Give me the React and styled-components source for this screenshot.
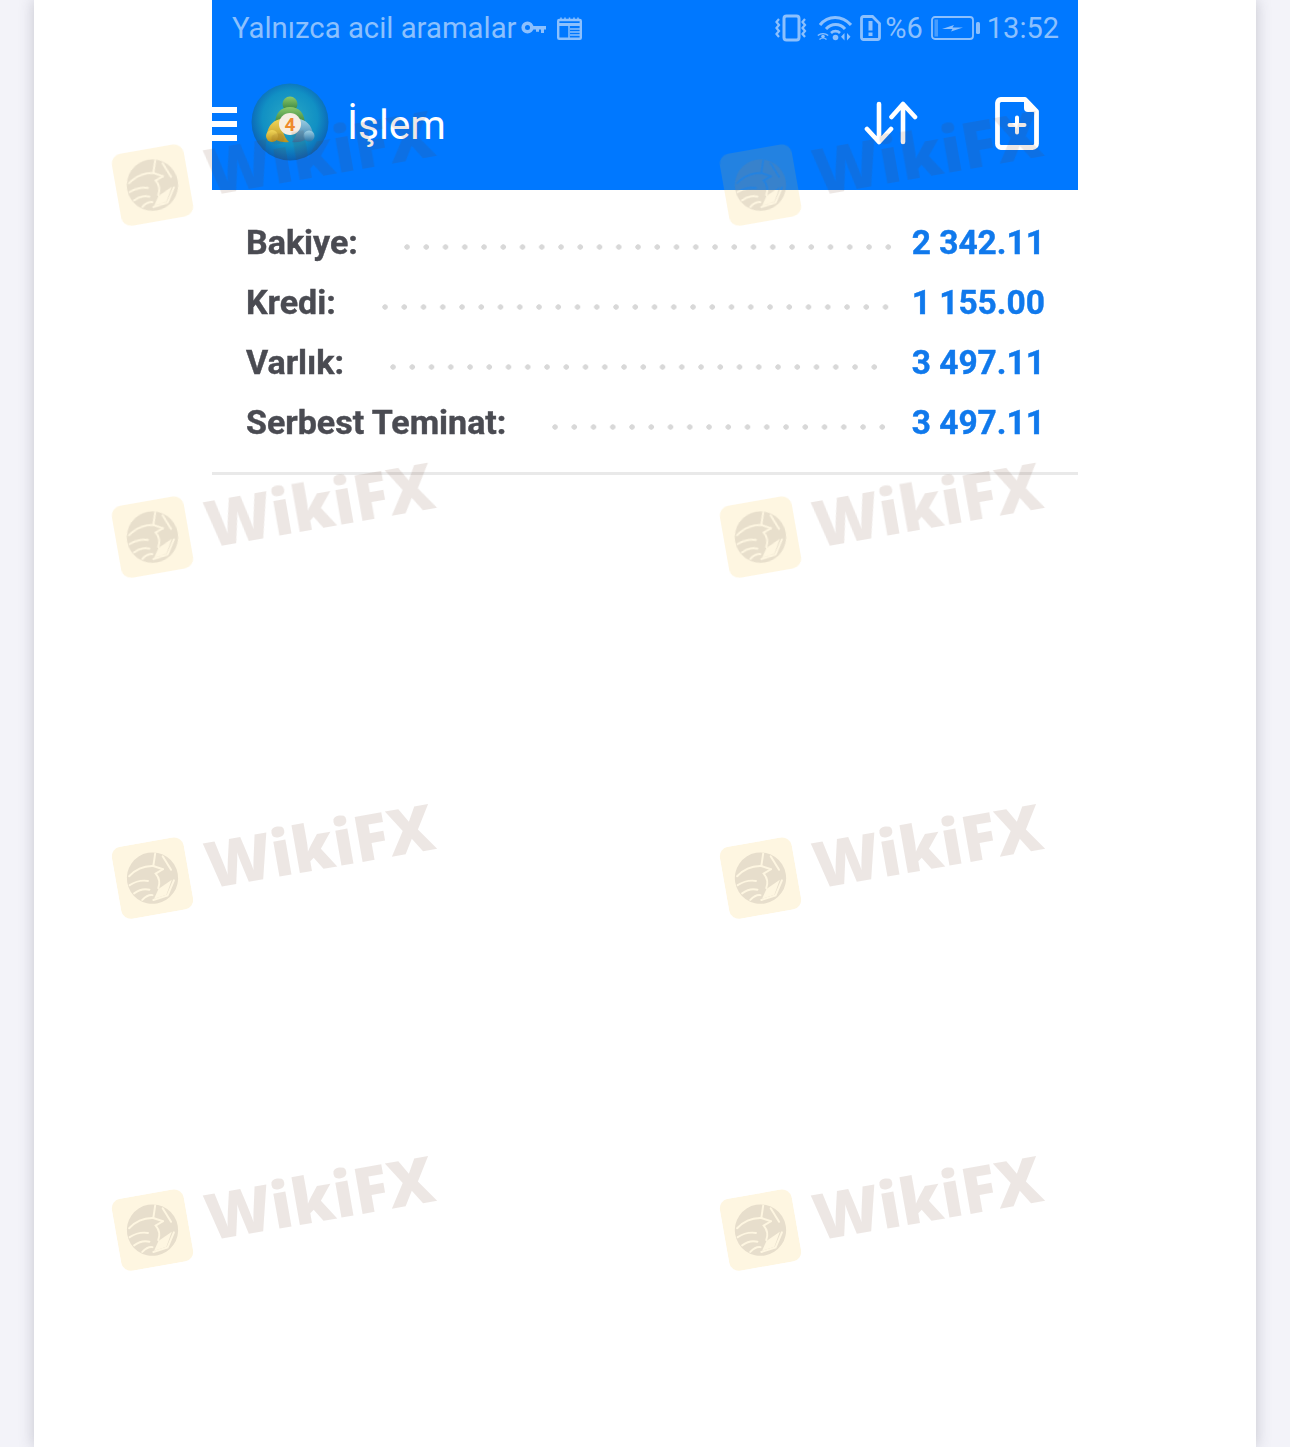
import React from 'react';
import styled, { createGlobalStyle } from 'styled-components';

const accounts = [
  { label: 'Bakiye:', value: '2 342.11', to: 17 },
  { label: 'Kredi:', value: '1 155.00', to: 19 },
  { label: 'Varlık:', value: '3 497.11', to: 29 },
  { label: 'Serbest Teminat:', value: '3 497.11', to: 21 },
];

const watermarks = [
  { left: 114, top: 126 }, { left: 722, top: 126 },
  { left: 114, top: 478 }, { left: 722, top: 478 },
  { left: 114, top: 819 }, { left: 722, top: 819 },
  { left: 114, top: 1171 }, { left: 722, top: 1171 },
];

const Eagle = () => (
  <svg width="73" height="73" viewBox="0 0 74 74">
    <defs>
      <mask id="eagleCut">
        <rect width="74" height="74" fill="#fff" />
        <g fill="none" stroke="#000" strokeWidth="2" strokeLinecap="round">
          <path d="M14 31c8-6 17-8 26-6l9 5" />
          <path d="M40 25l4-12" />
          <path d="M49 30l-8 3c3 5 3 10 0 15" />
          <path d="M13 40c7-3 13-3 19-1" />
          <path d="M16 49c6-3 11-3 16-1" />
          <path d="M23 57c4-3 8-4 11-3" />
          <path d="M34 59l15-2 9-14" />
          <path d="M51 17l6 15" />
        </g>
        <path d="M41 49l15-7-8 14-13 2z" fill="#000" />
      </mask>
    </defs>
    <rect width="74" height="74" rx="10" fill="#f9bd2c" fillOpacity="0.14" />
    <circle cx="37" cy="37" r="26" fill="#8a8078" fillOpacity="0.2" mask="url(#eagleCut)" />
  </svg>
);

const VibrateIcon = () => (
  <svg width="34" height="28" viewBox="0 0 34 28" fill="none" stroke="currentColor" strokeWidth="2.2">
    <rect x="9" y="2" width="15" height="24" rx="2.5" strokeWidth="3" />
    <path d="M4 5 1.500 8 4 11 1.500 14 4 17 1.500 20 4 23" />
    <path d="M30 5l-2.500 3L30 11l-2.500 3L30 17l-2.500 3L30 23" />
  </svg>
);

const WifiIcon = () => (
  <svg width="35" height="26" viewBox="0 0 35 26" fill="none" stroke="currentColor">
    <path d="M3 10C11 0 25 0 34 10" strokeWidth="3" />
    <path d="M9 14c5.500-6 14-6 19 0" strokeWidth="3" />
    <path d="M14 18c2.500-2.500 6.500-2.500 9 0" strokeWidth="2.600" />
    <circle cx="18.500" cy="22.500" r="2.800" fill="currentColor" stroke="none" />
    <circle cx="6" cy="21.500" r="1.800" fill="currentColor" stroke="none" />
    <path d="M2.500 24.500a5 5 0 0 1 7 0M0.800 20.500a8 8 0 0 1 10.400 0" strokeWidth="1.300" />
    <path d="M27.500 18v7.500l-3.500-3.700zM30 18v7.500l3.500-3.700z" fill="currentColor" stroke="none" />
  </svg>
);

const SimAlertIcon = () => (
  <svg width="21" height="26" viewBox="0 0 21 26" fill="none">
    <path d="M3.500 1.500h9l7 7v14a2 2 0 0 1-2 2h-14a2 2 0 0 1-2-2v-19a2 2 0 0 1 2-2z" stroke="currentColor" strokeWidth="2.800" />
    <path d="M8.500 6h4v9.500h-4zM8.500 17.500h4V21h-4z" fill="currentColor" />
  </svg>
);

const BatteryIcon = () => (
  <svg width="49" height="24" viewBox="0 0 49 24" fill="none">
    <rect x="1" y="1" width="41" height="22" rx="3" stroke="currentColor" strokeWidth="1.800" />
    <rect x="3.500" y="3.500" width="3.500" height="17" fill="currentColor" fillOpacity="0.5" />
    <path d="M11 13l12-4-1.500 2.500H32l-12 4 1.500-2.500z" fill="currentColor" />
    <rect x="45" y="6" width="4" height="12" rx="1.500" fill="currentColor" />
  </svg>
);

const KeyIcon = () => (
  <svg width="25" height="14" viewBox="0 0 25 14" fill="none">
    <circle cx="6.500" cy="6.500" r="4.300" stroke="currentColor" strokeWidth="3.600" />
    <path d="M11 5h14v3.400h-2v3.500h-3V8.400h-2v2.300h-3V8.400h-4z" fill="currentColor" />
  </svg>
);

const CalendarIcon = () => (
  <svg width="25" height="23" viewBox="0 0 25 23" fill="none" stroke="currentColor">
    <rect x="1.200" y="3" width="22.600" height="18.800" rx="1" strokeWidth="2.400" />
    <path d="M1 7.500h23" strokeWidth="3" />
    <path d="M4 0.500v3M8 0.500v3M12.500 0.500v3M17 0.500v3M21 0.500v3" strokeWidth="1.500" />
    <path d="M12 9v12M13 12h10M13 15h10M13 18h10" strokeWidth="1.500" />
  </svg>
);

const SortIcon = () => (
  <svg width="55" height="44" viewBox="0 0 55 44" fill="none" stroke="#fff" strokeWidth="4.600" strokeLinecap="round" strokeLinejoin="round">
    <path d="M15 3v38M3 28l12 13 12-13" />
    <path d="M39 3v38M27.500 16 39 3l12 13" />
  </svg>
);

const NewFileIcon = () => (
  <svg width="44" height="53" viewBox="0 0 44 53" fill="none">
    <path d="M6 2.500h24l11.500 12V46a4 4 0 0 1-4 4.500H6A4 4 0 0 1 2.500 46V6A4 4 0 0 1 6 2.500z" stroke="#fff" strokeWidth="4.800" strokeLinejoin="round" />
    <path d="M29 1l14 14H33a4 4 0 0 1-4-4z" fill="#fff" />
    <path d="M22 20.500v15M14.500 28h15" stroke="#fff" strokeWidth="4" strokeLinecap="round" />
  </svg>
);

const TerminalLogo = () => (
  <svg width="78" height="78" viewBox="0 0 78 78">
    <defs>
      <radialGradient id="mtDisc" cx="50%" cy="45%" r="55%">
        <stop offset="0%" stopColor="#2aa9c4" />
        <stop offset="65%" stopColor="#1190c4" />
        <stop offset="100%" stopColor="#0a5fb4" />
      </radialGradient>
      <linearGradient id="mtGreen" x1="0" y1="0" x2="0" y2="1">
        <stop offset="0%" stopColor="#8cc96a" />
        <stop offset="100%" stopColor="#2f7d3c" />
      </linearGradient>
      <linearGradient id="mtGold" x1="0" y1="0" x2="0" y2="1">
        <stop offset="0%" stopColor="#f1d65a" />
        <stop offset="100%" stopColor="#b9921f" />
      </linearGradient>
      <linearGradient id="mtBlue" x1="0" y1="0" x2="0" y2="1">
        <stop offset="0%" stopColor="#9fd0e4" />
        <stop offset="100%" stopColor="#2c76a8" />
      </linearGradient>
    </defs>
    <circle cx="39" cy="39" r="38.500" fill="url(#mtDisc)" />
    <circle cx="39" cy="21" r="7.500" fill="url(#mtGreen)" />
    <path d="M24 42c0-12 6-18 15-18s15 6 15 18c-6-6-10-8-15-8s-9 2-15 8z" fill="url(#mtGreen)" />
    <path d="M33 36c-9-1-16 6-17 15 7 6 14 9 22 8-6-6-8-14-5-23z" fill="url(#mtGold)" />
    <circle cx="21" cy="53" r="6" fill="url(#mtGold)" />
    <path d="M45 36c9-1 16 6 17 15-6 6-12 9-21 8 5-6 7-14 4-23z" fill="url(#mtBlue)" />
    <circle cx="58" cy="53" r="5.500" fill="url(#mtBlue)" />
    <circle cx="39" cy="41" r="11" fill="#f7ede2" />
    <FourDigit x="39" y="48" textAnchor="middle">4</FourDigit>
  </svg>
);

export default function App() {
  return (
    <Page>
      <GlobalStyle />
      <Sheet>
        <Phone>
          <StatusBar>
            <StatusGroup>
              <CarrierText>Yalnızca acil aramalar</CarrierText>
              <KeyIcon />
              <CalendarGap><CalendarIcon /></CalendarGap>
            </StatusGroup>
            <StatusGroup>
              <VibrateIcon />
              <WifiSlot><WifiIcon /></WifiSlot>
              <SimAlertIcon />
              <BatteryText>%6</BatteryText>
              <BatterySlot><BatteryIcon /></BatterySlot>
              <ClockText>13:52</ClockText>
            </StatusGroup>
          </StatusBar>
          <AppBar>
            <MenuButton><span /><span /><span /></MenuButton>
            <LogoSlot><TerminalLogo /></LogoSlot>
            <Title>İşlem</Title>
            <Actions>
              <SortIcon />
              <NewFileIcon />
            </Actions>
          </AppBar>
          <AccountList>
            {accounts.map((row) => (
              <AccountRow key={row.label}>
                <AccountLabel>{row.label}</AccountLabel>
                <Leader $to={row.to} />
                <AccountValue>{row.value}</AccountValue>
              </AccountRow>
            ))}
          </AccountList>
        </Phone>
      </Sheet>
      {watermarks.map((mark) => (
        <Watermark key={`${mark.left}-${mark.top}`} style={{ left: mark.left, top: mark.top }}>
          <Eagle />
          <WatermarkText>WikiFX</WatermarkText>
        </Watermark>
      ))}
    </Page>
  );
}

const GlobalStyle = createGlobalStyle`
  html, body {
    margin: 0;
    padding: 0;
    background: #f3f3f9;
  }
  * {
    box-sizing: border-box;
  }
`;

const Page = styled.div`
  position: relative;
  width: 1290px;
  height: 1447px;
  overflow: hidden;
  padding: 0 34px;
  background: #f3f3f9;
  font-family: Roboto, "Liberation Sans", sans-serif;
`;

const Sheet = styled.div`
  height: 100%;
  padding-left: 178px;
  background: #fff;
  box-shadow: 0 0 14px rgba(60, 60, 80, 0.25);
`;

const Phone = styled.div`
  width: 866px;
  filter: blur(0.4px);
`;

const StatusBar = styled.div`
  display: flex;
  align-items: center;
  justify-content: space-between;
  height: 56px;
  padding: 0 19px 0 20px;
  background: #0078ff;
  color: #8cc0fd;
`;

const StatusGroup = styled.div`
  display: flex;
  align-items: center;
`;

const CarrierText = styled.span`
  margin-right: 4px;
  font-size: 29.3px;
  font-weight: 400;
`;

const CalendarGap = styled.span`
  display: flex;
  margin-left: 11px;
`;

const WifiSlot = styled.span`
  display: flex;
  margin: 0 8px;
`;

const BatteryText = styled.span`
  margin-left: 4px;
  font-size: 29px;
`;

const BatterySlot = styled.span`
  display: flex;
  margin: 0 7px 0 8px;
`;

const ClockText = styled.span`
  font-size: 29px;
`;

const AppBar = styled.div`
  display: flex;
  align-items: center;
  height: 134px;
  background: #0078ff;
`;

const MenuButton = styled.div`
  display: flex;
  flex-direction: column;
  gap: 8px;
  width: 25px;
  margin-top: 2px;
  span {
    display: block;
    height: 6px;
    background: #fff;
  }
`;

const LogoSlot = styled.div`
  display: flex;
  margin: -2px 0 0 14px;
`;

const Title = styled.h1`
  margin: 4px 0 0 18px;
  color: #fff;
  font-size: 40.5px;
  font-weight: 400;
`;

const Actions = styled.div`
  display: flex;
  align-items: center;
  gap: 76px;
  margin: 0 39px 0 auto;
`;

const FourDigit = styled.text`
  fill: #ef8a2c;
  font-family: Roboto, sans-serif;
  font-size: 19px;
  font-weight: 700;
`;

const AccountList = styled.div`
  padding: 22px 33px 20px 34px;
  border-bottom: 3px solid #e9e9e9;
`;

const AccountRow = styled.div`
  display: flex;
  align-items: center;
  height: 60px;
`;

const AccountLabel = styled.span`
  color: #4a4b52;
  font-size: 34px;
  font-weight: 700;
  white-space: nowrap;
  -webkit-text-stroke: 0.4px #4a4b52;
`;

const Leader = styled.span`
  flex: 1;
  height: 6px;
  margin: 10px ${(p) => p.$to}px 0 46px;
  background-image: radial-gradient(circle at 3px 3px, #d8d8d8 2.4px, transparent 3px);
  background-size: 19.25px 6px;
  background-repeat: repeat-x;
`;

const AccountValue = styled.span`
  color: #1079ec;
  font-size: 33.5px;
  font-weight: 700;
  white-space: nowrap;
  -webkit-text-stroke: 0.4px #1079ec;
`;

const Watermark = styled.div`
  position: absolute;
  display: flex;
  align-items: center;
  gap: 18px;
  height: 74px;
  transform: rotate(-10deg);
  pointer-events: none;
`;

const WatermarkText = styled.span`
  margin-top: -6px;
  color: rgba(110, 60, 30, 0.12);
  font-family: "Open Sans", sans-serif;
  font-size: 64px;
  font-weight: 800;
  line-height: 74px;
`;
